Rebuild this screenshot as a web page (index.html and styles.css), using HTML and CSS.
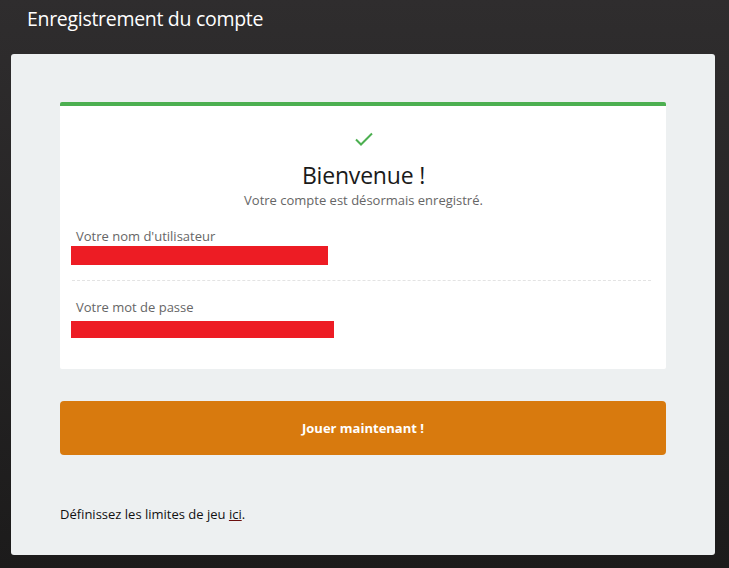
FILE: index.html
```
<!DOCTYPE html>
<html lang="fr">
<head>
<meta charset="utf-8">
<link rel="stylesheet" href="styles.css">
</head>
<body>
<header class="topbar"><h1 class="title">Enregistrement du compte</h1></header>
<main class="panel">
  <section class="card">
    <div class="check">
      <svg width="20" height="16" viewBox="0 0 20 16"><path d="M2 8.5 L7 13.5 L18 2.5" fill="none" stroke="#4caf50" stroke-width="2"/></svg>
    </div>
    <h2 class="welcome">Bienvenue !</h2>
    <p class="sub">Votre compte est désormais enregistré.</p>
    <div class="field">
      <div class="label">Votre nom d'utilisateur</div>
      <div class="redact redact-user"></div>
    </div>
    <div class="sep"></div>
    <div class="field">
      <div class="label">Votre mot de passe</div>
      <div class="redact redact-pass"></div>
    </div>
  </section>
  <button class="play">Jouer maintenant !</button>
  <p class="limits">Définissez les limites de jeu <a href="#" class="link">ici</a>.</p>
</main>
</body>
</html>
```
FILE: styles.css
```
* { box-sizing: border-box; }
html, body { margin: 0; padding: 0; }
body {
  width: 729px;
  height: 568px;
  overflow: hidden;
  background: linear-gradient(#2f2d2e, #1c1b1b);
  font-family: "Open Sans", "Noto Sans", sans-serif;
}
.topbar {
  height: 54px;
  padding: 6px 0 0 27px;
}
.title {
  margin: 0;
  color: #fff;
  font-weight: 400;
  font-size: 19.5px;
  line-height: 26px;
  letter-spacing: -0.3px;
}
.panel {
  margin: 0 14px 0 11px;
  height: 501px;
  background: #edf0f1;
  border-radius: 3px;
  padding: 48px 49px 0 49px;
}
.card {
  background: #fff;
  border-top: 4px solid #4caf50;
  border-radius: 2px;
  height: 267px;
  padding: 25px 10px 0 11px;
}
.check {
  display: flex;
  justify-content: center;
  height: 20px;
}
.welcome {
  margin: 9px 0 0;
  text-align: center;
  font-weight: 400;
  font-size: 23px;
  line-height: 30px;
  color: #1a1a1a;
  letter-spacing: -0.2px;
}
.sub {
  margin: 0;
  text-align: center;
  font-size: 13px;
  line-height: 20px;
  color: #666;
}
.field { padding-top: 17px; }
.label {
  font-size: 13px;
  line-height: 18px;
  color: #666;
  padding-left: 5px;
}
.redact { background: #ed1c24; }
.redact-user { width: 257px; height: 19px; margin-top: 1px; }
.redact-pass { width: 263px; height: 17px; margin-top: 5px; }
.sep {
  margin: 15px 5px 0 1px;
  border-top: 1px dashed #e3e3e3;
  height: 0;
}
.play {
  display: block;
  width: 100%;
  height: 54px;
  margin-top: 32px;
  border: none;
  border-radius: 4px;
  background: #d87a0e;
  color: #fff;
  font-family: "Open Sans", "Noto Sans", sans-serif;
  font-weight: 700;
  font-size: 13px;
}
.limits {
  margin: 50px 0 0;
  font-size: 13px;
  line-height: 18px;
  color: #111;
}
.link {
  color: #111;
  text-decoration: underline;
  text-decoration-color: #6b0f0f;
}
```
